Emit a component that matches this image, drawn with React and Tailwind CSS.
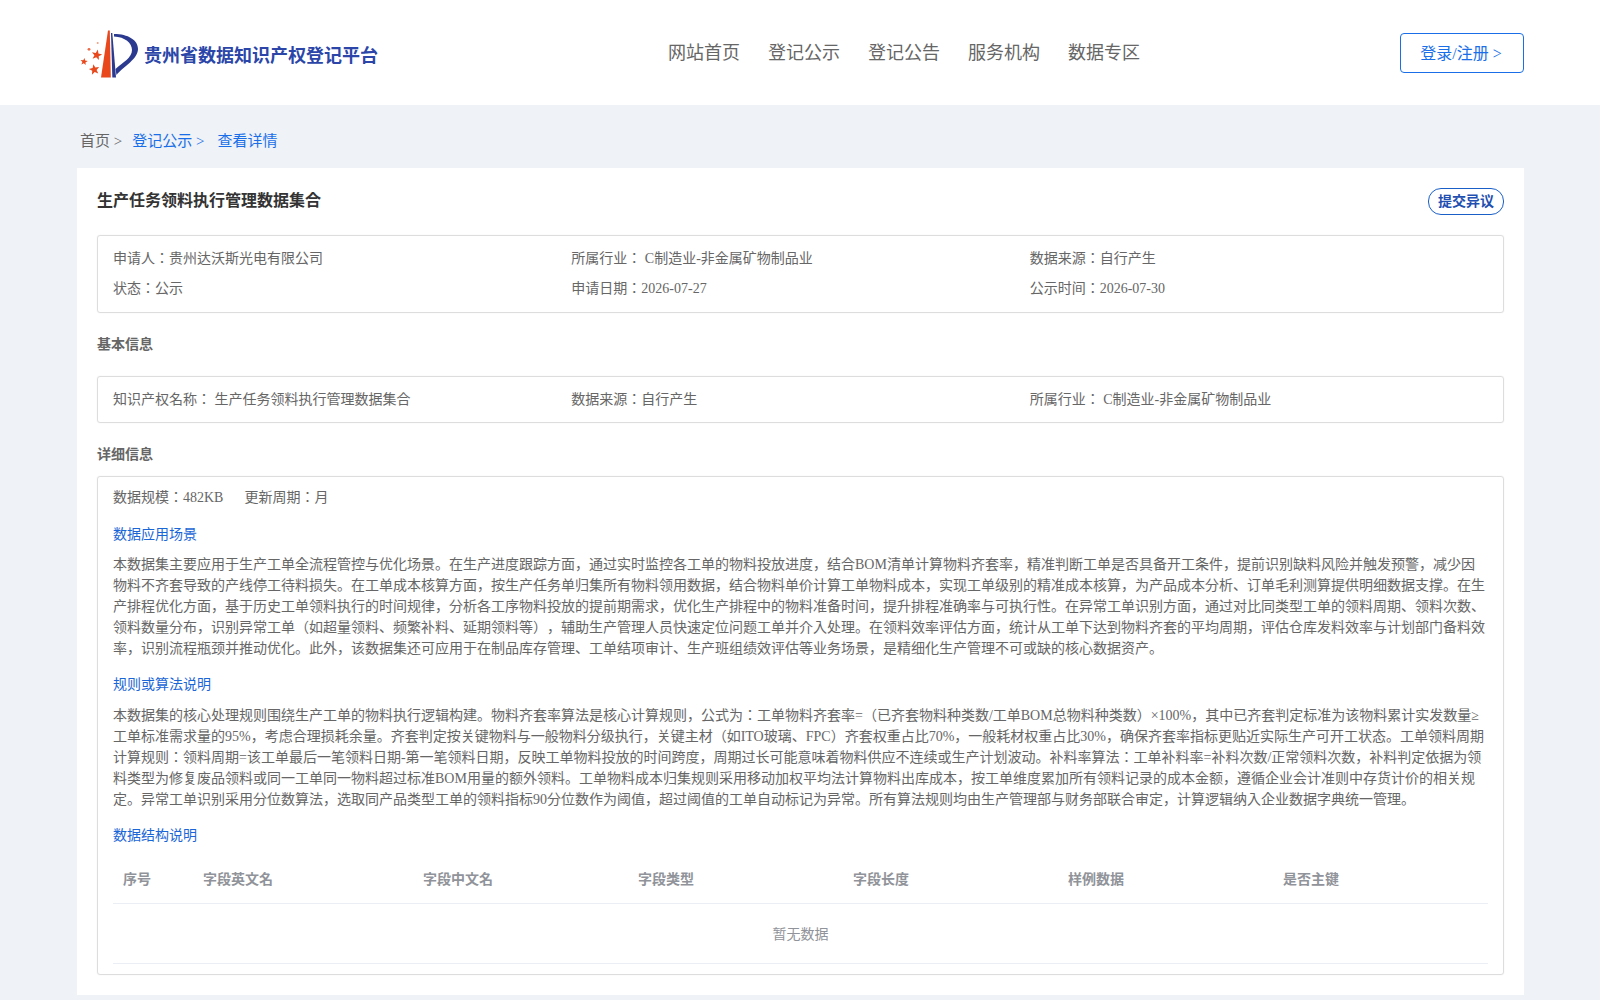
import React from 'react';

const navItems = ['网站首页', '登记公示', '登记公告', '服务机构', '数据专区'];
const columns = ['序号', '字段英文名', '字段中文名', '字段类型', '字段长度', '样例数据', '是否主键'];

const scenario = '本数据集主要应用于生产工单全流程管控与优化场景。在生产进度跟踪方面，通过实时监控各工单的物料投放进度，结合BOM清单计算物料齐套率，精准判断工单是否具备开工条件，提前识别缺料风险并触发预警，减少因物料不齐套导致的产线停工待料损失。在工单成本核算方面，按生产任务单归集所有物料领用数据，结合物料单价计算工单物料成本，实现工单级别的精准成本核算，为产品成本分析、订单毛利测算提供明细数据支撑。在生产排程优化方面，基于历史工单领料执行的时间规律，分析各工序物料投放的提前期需求，优化生产排程中的物料准备时间，提升排程准确率与可执行性。在异常工单识别方面，通过对比同类型工单的领料周期、领料次数、领料数量分布，识别异常工单（如超量领料、频繁补料、延期领料等），辅助生产管理人员快速定位问题工单并介入处理。在领料效率评估方面，统计从工单下达到物料齐套的平均周期，评估仓库发料效率与计划部门备料效率，识别流程瓶颈并推动优化。此外，该数据集还可应用于在制品库存管理、工单结项审计、生产班组绩效评估等业务场景，是精细化生产管理不可或缺的核心数据资产。';

const rules = '本数据集的核心处理规则围绕生产工单的物料执行逻辑构建。物料齐套率算法是核心计算规则，公式为：工单物料齐套率=（已齐套物料种类数/工单BOM总物料种类数）×100%，其中已齐套判定标准为该物料累计实发数量≥工单标准需求量的95%，考虑合理损耗余量。齐套判定按关键物料与一般物料分级执行，关键主材（如ITO玻璃、FPC）齐套权重占比70%，一般耗材权重占比30%，确保齐套率指标更贴近实际生产可开工状态。工单领料周期计算规则：领料周期=该工单最后一笔领料日期-第一笔领料日期，反映工单物料投放的时间跨度，周期过长可能意味着物料供应不连续或生产计划波动。补料率算法：工单补料率=补料次数/正常领料次数，补料判定依据为领料类型为修复废品领料或同一工单同一物料超过标准BOM用量的额外领料。工单物料成本归集规则采用移动加权平均法计算物料出库成本，按工单维度累加所有领料记录的成本金额，遵循企业会计准则中存货计价的相关规定。异常工单识别采用分位数算法，选取同产品类型工单的领料指标90分位数作为阈值，超过阈值的工单自动标记为异常。所有算法规则均由生产管理部与财务部联合审定，计算逻辑纳入企业数据字典统一管理。';

const starPoints = (cx, cy, r, rot) => {
    const pts = [];
    for (let i = 0; i < 10; i++) {
        const rad = i % 2 === 0 ? r : r * 0.42;
        const a = ((rot + i * 36 - 90) * Math.PI) / 180;
        pts.push(`${(cx + rad * Math.cos(a)).toFixed(2)},${(cy + rad * Math.sin(a)).toFixed(2)}`);
    }
    return pts.join(' ');
};

const Logo = () => (
    <svg width="60" height="52" viewBox="0 0 60 52" className="shrink-0">
        <path d="M30 2.500 L31.800 2.500 L32.800 49.500 L23 49.500 Z" fill="#e8481c" />
        <path d="M33 5 L34.300 5 L38 49.500 L34.300 49.500 Z" fill="#2b3a8f" />
        <path d="M36 6 C50 6 60 12 60 21 C60 31 46 38 38.500 47 L37.500 41 C45 34 54 30 54 22 C54 15 47 9 36 8.500 Z" fill="#2b3a8f" />
        <polygon points={starPoints(18.7, 27, 5.5, 12)} fill="#e8481c" />
        <polygon points={starPoints(16.3, 41.7, 5.5, -10)} fill="#e8481c" />
        <polygon points={starPoints(6, 33.7, 3.8, 8)} fill="#e8481c" />
        <circle cx="11" cy="21.300" r="1.400" fill="#ee6a45" />
        <circle cx="19.700" cy="15" r="1" fill="#f0a080" />
    </svg>
);

const Section = ({ children }) => (
    <div className="text-[14px] leading-[21px] text-[#1a66d6]">{children}</div>
);

export default function App() {
    return (
        <div className="min-h-[1000px] bg-[#eff2f6] text-[14px] text-[#666] [text-spacing-trim:space-all]" style={{ fontFamily: '"Liberation Serif", "Noto Sans CJK JP", serif' }}>
            <header className="h-[105px] bg-white flex items-center pl-[78px] pr-[76px]">
                <div className="w-[590px] flex items-center gap-[6px] pt-[2px]">
                    <Logo />
                    <span className="text-[18px] font-bold text-[#2b46a8] mt-[6px]">贵州省数据知识产权登记平台</span>
                </div>
                <nav className="flex gap-[28px] text-[18px] text-[#666] pt-[1px]">
                    {navItems.map((item) => (
                        <a key={item}>{item}</a>
                    ))}
                </nav>
                <button className="ml-auto w-[124px] h-[40px] border border-[#1a6fe8] rounded-[4px] bg-white text-[16px] text-[#1a6fe8] pt-[2px] pr-[2px]">
                    登录/注册 &gt;
                </button>
            </header>

            <div className="h-[63px] flex items-center pl-[80px] pt-[9px] text-[15px]">
                <span>首页 &gt;</span>
                <span className="ml-[10px] text-[#1a6fe8]">登记公示 &gt;</span>
                <span className="ml-[13px] text-[#1a6fe8]">查看详情</span>
            </div>

            <main className="ml-[77px] mr-[76px] bg-white p-[20px]">
                <div className="flex justify-between items-start h-[47px]">
                    <h1 className="pt-[1px] text-[16px] leading-[24px] font-bold text-[#333]">生产任务领料执行管理数据集合</h1>
                    <button className="w-[76px] h-[27px] border border-[#1a5fc8] rounded-[13px] text-[14px] font-bold text-[#1f4fb0] bg-white">提交异议</button>
                </div>

                <div className="border border-[#ddd] rounded-[3px] px-[15px] pt-[12px] pb-[13px] shadow-[0_0_1px_#ddd]">
                    <div className="grid grid-cols-3 gap-y-[9px] leading-[21px]">
                        <div>申请人：贵州达沃斯光电有限公司</div>
                        <div>所属行业： C制造业-非金属矿物制品业</div>
                        <div>数据来源：自行产生</div>
                        <div>状态：公示</div>
                        <div>申请日期：2026-07-27</div>
                        <div>公示时间：2026-07-30</div>
                    </div>
                </div>

                <h2 className="mt-[22px] mb-[21px] text-[14px] leading-[20px] font-bold text-[#666]">基本信息</h2>

                <div className="border border-[#ddd] rounded-[3px] px-[15px] py-[12px] shadow-[0_0_1px_#ddd]">
                    <div className="grid grid-cols-3 leading-[21px]">
                        <div>知识产权名称： 生产任务领料执行管理数据集合</div>
                        <div>数据来源：自行产生</div>
                        <div>所属行业： C制造业-非金属矿物制品业</div>
                    </div>
                </div>

                <h2 className="mt-[22px] mb-[11px] text-[14px] leading-[20px] font-bold text-[#666]">详细信息</h2>

                <div className="border border-[#ddd] rounded-[3px] px-[15px] pt-[10px] pb-[10px] shadow-[0_0_1px_#ddd]">
                    <div className="leading-[21px] flex gap-[21px] mb-[16px]">
                        <span>数据规模：482KB</span>
                        <span>更新周期：月</span>
                    </div>
                    <Section>数据应用场景</Section>
                    <p className="mt-[9px] mb-[15px] leading-[21px]">{scenario}</p>
                    <Section>规则或算法说明</Section>
                    <p className="mt-[10px] mb-[15px] leading-[21px]">{rules}</p>
                    <Section>数据结构说明</Section>
                    <table className="mt-[11px] w-full table-fixed border-collapse">
                        <colgroup>
                            <col className="w-[80px]" />
                            <col className="w-[220px]" />
                            <col className="w-[215px]" />
                            <col className="w-[215px]" />
                            <col className="w-[215px]" />
                            <col className="w-[215px]" />
                            <col className="w-[215px]" />
                        </colgroup>
                        <thead>
                            <tr className="h-[46px] border-b border-[#ebeef5]">
                                {columns.map((col) => (
                                    <th key={col} className="px-[10px] text-left font-bold text-[#909399]">{col}</th>
                                ))}
                            </tr>
                        </thead>
                        <tbody>
                            <tr className="h-[60px] border-b border-[#ebeef5]">
                                <td colSpan={7} className="pt-[3px] text-center text-[#909399]">暂无数据</td>
                            </tr>
                        </tbody>
                    </table>
                </div>
            </main>
        </div>
    );
}
